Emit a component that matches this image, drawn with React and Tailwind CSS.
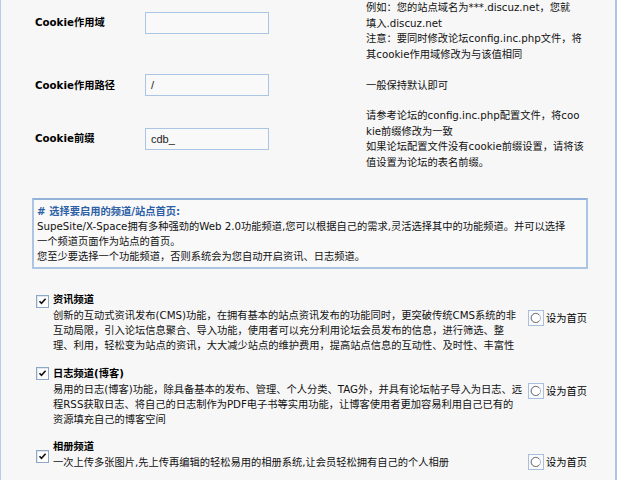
import React from "react";

const FONT = { fontFamily: "'DejaVu Sans', 'Noto Sans CJK SC', sans-serif" };

function Checkbox() {
  return (
    <span className="flex h-[13px] w-[13px] items-center justify-center border border-[#8ea7c6] bg-white shadow-[inset_1px_1px_0_#dfe6ef]">
      <svg width="9" height="9" viewBox="0 0 9 9">
        <path d="M1.5 4.2 L3.5 6.4 L7.6 1.8" fill="none" stroke="#111" strokeWidth="1.6" />
      </svg>
    </span>
  );
}

function HomeRadio() {
  return (
    <div className="flex items-center gap-[2px]">
      <span className="flex h-[16px] w-[16px] items-center justify-center border border-[#a9c0dc] bg-[#f9fafc]">
        <svg width="12" height="12" viewBox="0 0 12 12">
          <circle cx="6" cy="6" r="4.6" fill="#fff" stroke="#b9b9b9" strokeWidth="1" />
          <path d="M9.2 3 A4.6 4.6 0 1 0 9.4 8.6" fill="none" stroke="#7a7a7a" strokeWidth="1" />
        </svg>
      </span>
      <span className="whitespace-nowrap leading-[15px] text-black">设为首页</span>
    </div>
  );
}

function Lines({ lines, className = "" }) {
  return (
    <div className={className}>
      {lines.map((l) => (
        <div key={l} className="whitespace-nowrap">
          {l}
        </div>
      ))}
    </div>
  );
}

function TextInput({ value, className = "" }) {
  return (
    <div
      className={`flex h-[22px] w-[124px] shrink-0 items-center border border-[#abc6e4] bg-[#f9f9f9] px-[5px] text-[11px] text-[#222] ${className}`}
      style={{ fontFamily: "'Liberation Sans', sans-serif" }}
    >
      {value}
    </div>
  );
}

function Channel({ title, desc, boxTop, radioTop, className = "" }) {
  return (
    <div className={`flex pl-[35px] ${className}`}>
      <div className={`w-[17px] shrink-0 ${boxTop}`}>
        <Checkbox />
      </div>
      <div className="flex flex-col">
        <div className="font-bold leading-[18px] text-black">{title}</div>
        <div className="flex">
          <Lines lines={desc} className="w-[475px] shrink-0 leading-[15px] text-[#111]" />
          <div className={radioTop}>
            <HomeRadio />
          </div>
        </div>
      </div>
    </div>
  );
}

export default function App() {
  return (
    <div className="flex h-[480px] w-[620px] overflow-hidden bg-white text-[10.25px]" style={FONT}>
      <div className="flex w-[617px] shrink-0 flex-col border-l border-r-2 border-l-[#b4cce8] border-r-[#a9c6e6] bg-[#f7f7f7]">
        {/* cookie settings */}
        <div className="flex h-[62px] pl-[34px]">
          <div className="mt-[15px] w-[110px] shrink-0 font-bold leading-[15px] text-black">Cookie作用域</div>
          <TextInput value="" className="mt-[12px]" />
          <Lines
            className="ml-[97px] leading-[15.5px] text-[#111]"
            lines={[
              "例如：您的站点域名为***.discuz.net，您就",
              "填入.discuz.net",
              "注意：要同时修改论坛config.inc.php文件，将",
              "其cookie作用域修改为与该值相同",
            ]}
          />
        </div>
        <div className="flex h-[46px] pl-[34px]">
          <div className="mt-[15.5px] w-[110px] shrink-0 font-bold leading-[15px] text-black">Cookie作用路径</div>
          <TextInput value="/" className="mt-[12px]" />
          <div className="ml-[97px] mt-[15.5px] leading-[15px] text-[#111]">一般保持默认即可</div>
        </div>
        <div className="flex h-[64px] pl-[34px]">
          <div className="mt-[22.5px] w-[110px] shrink-0 font-bold leading-[15px] text-black">Cookie前缀</div>
          <TextInput value="cdb_" className="mt-[20px]" />
          <Lines
            className="ml-[97px] leading-[15.5px] text-[#111]"
            lines={[
              "请参考论坛的config.inc.php配置文件，将coo",
              "kie前缀修改为一致",
              "如果论坛配置文件没有cookie前缀设置，请将该",
              "值设置为论坛的表名前缀。",
            ]}
          />
        </div>

        {/* channel notice */}
        <div className="ml-[31px] mt-[26px] w-[556px] border-2 border-[#abc5e3] border-t-[#93b2d8] bg-[#f9f9f9] px-[3px] pb-[3px] pt-[4px] leading-[15px] text-[#111]">
          <div className="font-bold text-[#2d5fa6]"># 选择要启用的频道/站点首页:</div>
          <div className="whitespace-nowrap">
            SupeSite/X-Space拥有多种强劲的Web 2.0功能频道,您可以根据自己的需求,灵活选择其中的功能频道。并可以选择
          </div>
          <div className="whitespace-nowrap">一个频道页面作为站点的首页。</div>
          <div className="whitespace-nowrap">您至少要选择一个功能频道，否则系统会为您自动开启资讯、日志频道。</div>
        </div>

        {/* channels */}
        <Channel
          className="mt-[21px]"
          boxTop="mt-[5px]"
          radioTop="mt-[2px]"
          title="资讯频道"
          desc={[
            "创新的互动式资讯发布(CMS)功能，在拥有基本的站点资讯发布的功能同时，更突破传统CMS系统的非",
            "互动局限，引入论坛信息聚合、导入功能，使用者可以充分利用论坛会员发布的信息，进行筛选、整",
            "理、利用，轻松变为站点的资讯，大大减少站点的维护费用，提高站点信息的互动性、及时性、丰富性",
          ]}
        />
        <Channel
          className="mt-[11px]"
          boxTop="mt-[3px]"
          radioTop="mt-[1px]"
          title="日志频道(博客)"
          desc={[
            "易用的日志(博客)功能，除具备基本的发布、管理、个人分类、TAG外，并具有论坛帖子导入为日志、远",
            "程RSS获取日志、将自己的日志制作为PDF电子书等实用功能，让博客使用者更加容易利用自己已有的",
            "资源填充自己的博客空间",
          ]}
        />
        <Channel
          className="mt-[10px]"
          boxTop="mt-[13px]"
          radioTop="-mt-[1px]"
          title="相册频道"
          desc={["一次上传多张图片,先上传再编辑的轻松易用的相册系统,让会员轻松拥有自己的个人相册"]}
        />
      </div>
    </div>
  );
}
